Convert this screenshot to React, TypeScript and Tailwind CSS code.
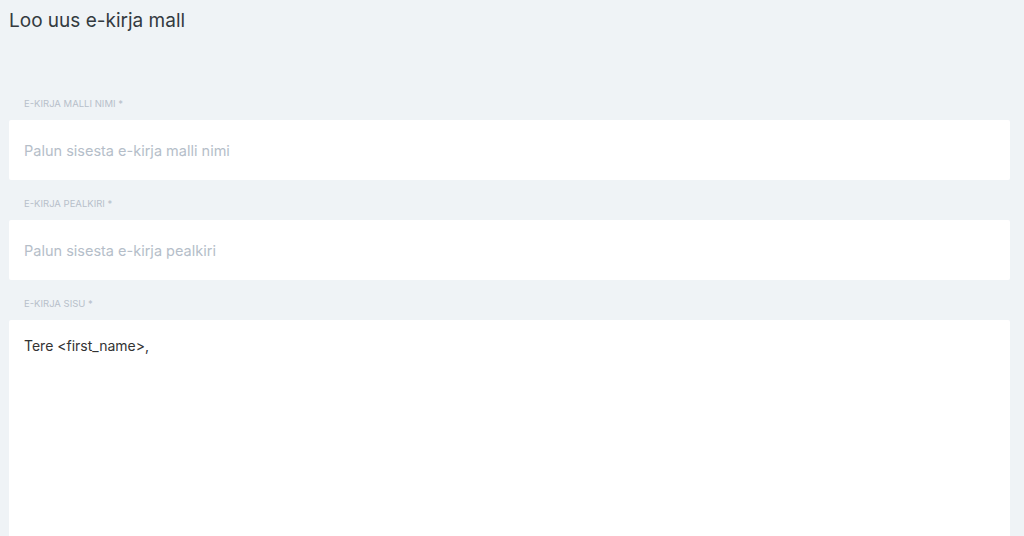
import React, { useState } from 'react';

const font = { fontFamily: 'Inter, "Noto Sans", sans-serif' };

type FieldProps = {
  label: string;
  placeholder: string;
};

const TextField: React.FC<FieldProps> = ({ label, placeholder }) => {
  const [value, setValue] = useState('');
  return (
    <div className="flex flex-col">
      <label className="px-[15px] pt-[18px] pb-[11px] text-[9.5px] leading-[11px] uppercase text-[#b7bfca]">
        {label}
      </label>
      <input
        className="h-[60px] w-full rounded-[2px] bg-white px-[15px] text-[14.5px] text-[#333] placeholder:text-[#b5bec9] outline-none"
        placeholder={placeholder}
        value={value}
        onChange={e => setValue(e.target.value)}
      />
    </div>
  );
};

export default function App() {
  const [body, setBody] = useState('Tere <first_name>,');

  return (
    <div className="h-screen overflow-hidden bg-[#eff3f6] pl-[9px] pr-[14px]" style={font}>
      <h1 className="pt-[9px] text-[19px] leading-[24px] text-[#333a40] font-normal">Loo uus e-kirja mall</h1>

      <div className="mt-[47px] flex flex-col">
        <TextField label="E-kirja malli nimi *" placeholder="Palun sisesta e-kirja malli nimi" />
        <TextField label="E-kirja pealkiri *" placeholder="Palun sisesta e-kirja pealkiri" />
        <div className="flex flex-col">
          <label className="px-[15px] pt-[18px] pb-[11px] text-[9.5px] leading-[11px] uppercase text-[#b7bfca]">
            E-kirja sisu *
          </label>
          <textarea
            className="h-[216px] w-full resize-none rounded-t-[2px] bg-white px-[15px] pt-[16px] text-[14px] leading-[20px] text-[#333] outline-none"
            value={body}
            onChange={e => setBody(e.target.value)}
          />
        </div>
      </div>
    </div>
  );
}
